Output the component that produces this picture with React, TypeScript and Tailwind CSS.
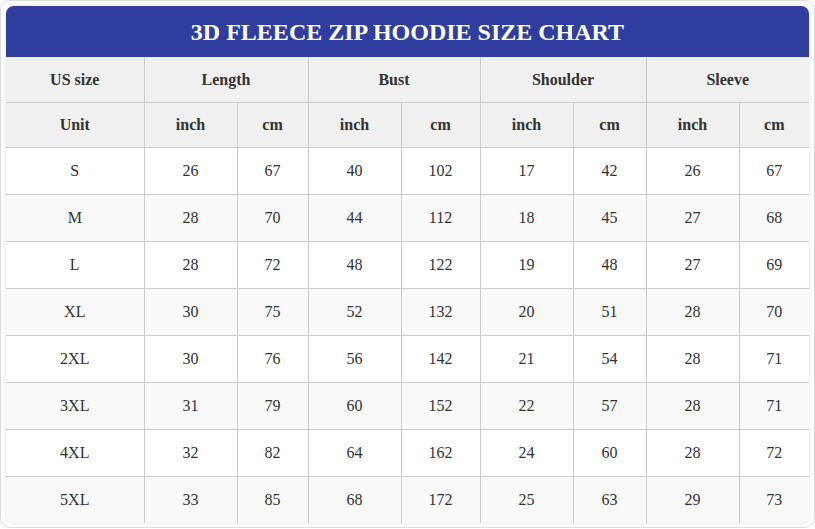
import React from 'react';

const widths = [138, 93, 71, 93, 79, 93, 73, 93, 70];

const groups = ['Length', 'Bust', 'Shoulder', 'Sleeve'];

const rows: (string | number)[][] = [
  ['S', 26, 67, 40, 102, 17, 42, 26, 67],
  ['M', 28, 70, 44, 112, 18, 45, 27, 68],
  ['L', 28, 72, 48, 122, 19, 48, 27, 69],
  ['XL', 30, 75, 52, 132, 20, 51, 28, 70],
  ['2XL', 30, 76, 56, 142, 21, 54, 28, 71],
  ['3XL', 31, 79, 60, 152, 22, 57, 28, 71],
  ['4XL', 32, 82, 64, 162, 24, 60, 28, 72],
  ['5XL', 33, 85, 68, 172, 25, 63, 29, 73],
];

export default function App() {
  return (
    <div className="h-[528px] w-[815px] rounded-[10px] border border-[#dcdcdc] bg-white p-[5px] font-['Liberation_Serif',serif] text-[#333]">
      <div className="overflow-hidden rounded-lg bg-white shadow-[0_0_4px_rgba(0,0,0,0.12)]">
        <h1 className="flex h-[51px] items-center justify-center bg-[#2f3e9e] text-[24px] font-bold text-white">
          3D FLEECE ZIP HOODIE SIZE CHART
        </h1>
        <table className="w-full table-fixed border-collapse text-center text-[16px]">
          <colgroup>
            {widths.map((w, i) => (
              <col key={i} style={{ width: w }} />
            ))}
          </colgroup>
          <thead className="bg-[#f0f0f0] font-bold">
            <tr className="h-[45px]">
              <th className="border-r border-b border-[#ccc] pt-[2px]">US size</th>
              {groups.map((g, i) => (
                <th
                  key={g}
                  colSpan={2}
                  className={i === groups.length - 1 ? 'border-b border-[#ccc] pt-[2px]' : 'border-r border-b border-[#ccc] pt-[2px]'}
                >
                  {g}
                </th>
              ))}
            </tr>
            <tr className="h-[45px]">
              <th className="border-r border-b border-[#ccc] pt-[1px]">Unit</th>
              {groups.map((g, i) => (
                <React.Fragment key={g}>
                  <th className="border-r border-b border-[#ccc] pt-[1px]">inch</th>
                  <th className={i === groups.length - 1 ? 'border-b border-[#ccc] pt-[1px]' : 'border-r border-b border-[#ccc] pt-[1px]'}>cm</th>
                </React.Fragment>
              ))}
            </tr>
          </thead>
          <tbody>
            {rows.map((r, ri) => (
              <tr key={ri} className={ri % 2 === 1 ? 'h-[47px] bg-[#f9f9f9]' : 'h-[47px] bg-white'}>
                {r.map((c, ci) => (
                  <td
                    key={ci}
                    className={
                      (ci === r.length - 1 ? '' : 'border-r ') +
                      (ri === rows.length - 1 ? 'border-[#ccc]' : 'border-b border-[#ccc]')
                    }
                  >
                    {c}
                  </td>
                ))}
              </tr>
            ))}
          </tbody>
        </table>
      </div>
    </div>
  );
}
